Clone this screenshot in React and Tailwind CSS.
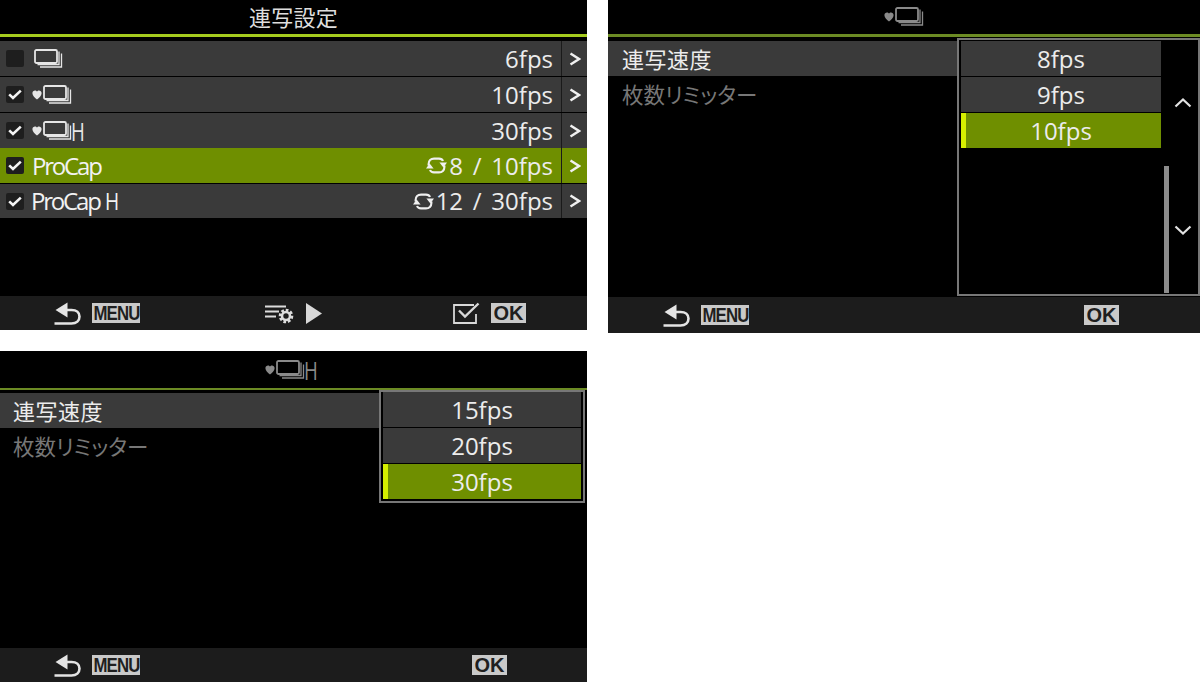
import React from "react";

const FONT = "[font-family:'Open_Sans','Noto_Sans_CJK_JP',sans-serif]";

// stacked frames, optional heart + H
const BurstIcon = ({ heart = false, h = false, color = "#e6e6e6", className = "" }) => (
  <span className={`inline-flex items-center ${className}`}>
    {heart && (
      <svg width="10" height="10" viewBox="0 0 10 10" className="mr-[1px]">
        <path d="M5 9.6C3 7.6.4 5.9.4 3.2.4 1.4 1.7.4 3 .4c.9 0 1.6.5 2 1.2C5.4.9 6.1.4 7 .4c1.3 0 2.6 1 2.6 2.8C9.6 5.9 7 7.6 5 9.6z" fill={color} />
      </svg>
    )}
    <svg width="29" height="20" viewBox="0 0 29 20" fill="none" stroke={color}>
      <rect x="1" y="1" width="22" height="13" rx="1.5" strokeWidth="1.8" />
      <path d="M25 2.5V15.5H3.5" strokeWidth="1.3" />
      <path d="M27.5 4.5V18H6" strokeWidth="1.3" />
    </svg>
    {h && (
      <span className="-ml-[1px] origin-left text-[26px] leading-none [transform:scaleX(0.72)]" style={{ color }}>
        H
      </span>
    )}
  </span>
);

const CheckBox = ({ checked }) => (
  <span className="flex h-[17px] w-[18px] items-center justify-center rounded-[2px] bg-[#1e1e1e]">
    {checked && (
      <svg width="14" height="11" viewBox="0 0 14 11" fill="none">
        <path d="M1.2 5.4 5 9 12.8 1.6" stroke="#f4f4f4" strokeWidth="2.6" />
      </svg>
    )}
  </span>
);

const LoopIcon = () => (
  <svg width="21" height="17" viewBox="0 0 21 17" fill="none" className="mr-[2px]">
    <path d="M2.6 8.5V7C2.6 3.8 4.8 1.6 8 1.6H13C15 1.6 16.4 2.4 17 4" stroke="#f0f0f0" strokeWidth="2.1" />
    <path d="M13.4 5.6H21L17.4 10.6Z" fill="#f0f0f0" />
    <path d="M18.4 8.5V10C18.4 13.2 16.2 15.4 13 15.4H8C6 15.4 4.6 14.6 4 13" stroke="#f0f0f0" strokeWidth="2.1" />
    <path d="M7.6 11.4H0L3.6 6.4Z" fill="#f0f0f0" />
  </svg>
);

const BackArrow = () => (
  <svg width="28" height="23" viewBox="0 0 28 23" fill="none">
    <path d="M0.5 21.5H17.5C22.5 21.5 25.5 18.5 25.5 14.5C25.5 10.5 22.5 8 17.5 8H9" stroke="#e4e4e4" strokeWidth="2.6" />
    <path d="M13.5 0.5V15.5L1.5 8Z" fill="#e4e4e4" />
  </svg>
);

const MenuBadge = () => (
  <span className="ml-[10px] flex h-[20px] w-[48px] items-center justify-center overflow-hidden bg-[#c9c9c9] text-[#1f1f1f] [font-family:'Liberation_Sans',sans-serif]">
    <span className="inline-block text-[20px] font-bold leading-none tracking-[-1px] [transform:scaleX(0.84)]">MENU</span>
  </span>
);

const OkBadge = () => (
  <span className="flex h-[20px] w-[35px] items-center justify-center bg-[#c9c9c9] text-[20px] font-bold leading-none text-[#1f1f1f] [font-family:'Liberation_Sans',sans-serif]">
    OK
  </span>
);

const Back = () => (
  <span className="flex items-center">
    <BackArrow />
    <MenuBadge />
  </span>
);

const SettingsIcon = () => (
  <svg width="30" height="21" viewBox="0 0 30 21" fill="none">
    <path d="M0 3.5H21M0 8.5H14M0 13.5H11" stroke="#dcdcdc" strokeWidth="2.2" />
    <circle cx="21" cy="13" r="5.8" stroke="#dcdcdc" strokeWidth="3" strokeDasharray="2.6 1.8" />
    <circle cx="21" cy="13" r="4" stroke="#dcdcdc" strokeWidth="2.6" />
  </svg>
);

const TickBox = () => (
  <svg width="28" height="22" viewBox="0 0 28 22" fill="none">
    <path d="M21 3H1V21H23V12" stroke="#d8d8d8" strokeWidth="1.8" />
    <path d="M6 8.5 12 14.5 25.5 1.5" stroke="#d8d8d8" strokeWidth="2.4" />
  </svg>
);

const Chevron = ({ dir }) => (
  <svg width="18" height="11" viewBox="0 0 18 11" fill="none">
    <path d={dir === "up" ? "M1.5 9.5 9 2.5 16.5 9.5" : "M1.5 1.5 9 8.5 16.5 1.5"} stroke="#e2e2e2" strokeWidth="2.2" />
  </svg>
);

const Footer = ({ className, children }) => (
  <div className={`flex shrink-0 items-center bg-[#1c1c1c] ${className}`}>{children}</div>
);

const Title = ({ line = "bg-[#6c8b24]", height = "h-[34px]", lineHeight = "h-[3px]", children }) => (
  <>
    <div className={`flex shrink-0 items-center justify-center bg-black text-[22px] tracking-[0.3px] text-[#dedede] ${height}`}>{children}</div>
    <div className={`shrink-0 ${lineHeight} ${line}`} />
  </>
);

const settings = [
  { checked: false, icon: <BurstIcon className="ml-[10px]" />, value: "6fps" },
  { checked: true, icon: <BurstIcon heart className="ml-[8px]" />, value: "10fps" },
  { checked: true, icon: <BurstIcon heart h className="ml-[8px]" />, value: "30fps" },
  { checked: true, label: "ProCap", labelClass: "ml-[8px]", loop: true, value: "8 / 10fps", active: true, rowClass: "h-[35px] -mt-[1px]" },
  { checked: true, label: "ProCap", h: true, labelClass: "ml-[7px]", loop: true, value: "12 / 30fps", rowClass: "h-[34px]" },
];

const SettingRow = ({ row }) => (
  <div className={`flex items-center pl-[6px] ${row.rowClass || "h-[35px]"} ${row.active ? "bg-[#6f8f00]" : "bg-[#3a3a3a]"}`}>
    <CheckBox checked={row.checked} />
    {row.icon}
    {row.label && (
      <span className={`text-[24px] leading-none tracking-[-2.2px] text-[#f2f2f2] ${row.labelClass}`}>
        {row.label}
        {row.h && <span className="ml-[5px] inline-block origin-left [transform:scaleX(0.8)]">H</span>}
      </span>
    )}
    <span className="ml-auto flex items-center pr-[8px] text-[24px] leading-none text-[#ececec]">
      {row.loop && <LoopIcon />}
      <span className="whitespace-pre [word-spacing:3.5px]">{row.value}</span>
    </span>
    <span className="flex h-full w-[26px] items-center justify-center border-l border-[#1a1a1a]">
      <svg width="12" height="14" viewBox="0 0 12 14" fill="none">
        <path d="M1.5 1.5 10 7 1.5 12.5" stroke="#f0f0f0" strokeWidth="2.4" />
      </svg>
    </span>
  </div>
);

const Option = ({ value, active }) => (
  <div className={`flex h-[35px] items-center justify-center text-[24px] leading-none text-[#ececec] ${active ? "border-l-[5px] border-[#d6f000] bg-[#6f8f00] pr-[5px]" : "bg-[#3a3a3a]"}`}>
    {value}
  </div>
);

const SideList = ({ width, inset = "pl-[14px]" }) => (
  <div className={`pt-[3px] ${width}`}>
    <div className={`flex h-[35px] items-center bg-[#3a3a3a] text-[22px] leading-none tracking-[0.5px] text-[#ececec] ${inset}`}>連写速度</div>
    <div className={`flex h-[37px] items-center text-[21.5px] leading-none text-[#777777] [font-feature-settings:'palt'] ${inset}`}>枚数リミッター</div>
  </div>
);

export default function App() {
  return (
    <div className={`flex h-[682px] w-[1200px] gap-[21px] overflow-hidden bg-white ${FONT}`}>
      <div className="flex w-[587px] flex-col gap-[21px]">
        {/* burst list */}
        <div className="flex h-[330px] flex-col bg-black">
          <Title line="bg-[#a5cb1e]">連写設定</Title>
          <div className="flex flex-1 flex-col gap-[1px] pt-[4px]">
            {settings.map((row, i) => (
              <SettingRow key={i} row={row} />
            ))}
          </div>
          <Footer className="h-[34px] pl-[54px]">
            <Back />
            <span className="ml-[125px] flex items-center gap-[11px]">
              <SettingsIcon />
              <svg width="16" height="21" viewBox="0 0 16 21">
                <path d="M0 0 16 10.5 0 21Z" fill="#d8d8d8" />
              </svg>
            </span>
            <span className="ml-[131px] flex items-center gap-[10px]">
              <TickBox />
              <OkBadge />
            </span>
          </Footer>
        </div>

        {/* heart H */}
        <div className="flex h-[331px] flex-col bg-black">
          <Title height="h-[37px]" lineHeight="h-[2px]">
            <BurstIcon heart h color="#8a8a8a" className="pl-[2px]" />
          </Title>
          <div className="flex flex-1 items-start">
            <SideList width="w-[379px]" inset="pl-[13px]" />
            <div className="flex w-[206px] flex-col gap-[1px] border-2 border-[#777777] p-[2px] pt-[0px]">
              <Option value="15fps" />
              <Option value="20fps" />
              <Option value="30fps" active />
            </div>
          </div>
          <Footer className="h-[34px] pl-[54px]">
            <Back />
            <span className="ml-[332px]">
              <OkBadge />
            </span>
          </Footer>
        </div>
      </div>

      {/* heart */}
      <div className="flex h-[333px] w-[592px] flex-col bg-black">
        <Title>
          <BurstIcon heart color="#8a8a8a" />
        </Title>
        <div className="mb-[1px] mt-[1px] flex flex-1">
          <SideList width="w-[349px]" />
          <div className="flex flex-1 border-2 border-[#777777] pl-[2px] pt-[1px]">
            <div className="flex w-[200px] flex-col gap-[1px]">
              <Option value="8fps" />
              <Option value="9fps" />
              <Option value="10fps" active />
            </div>
            <div className="flex flex-1 flex-col items-center pl-[3px]">
              <div className="flex h-[125px] w-full items-end justify-between">
                <span />
                <span className="mb-[58px] mr-[6px]">
                  <Chevron dir="up" />
                </span>
              </div>
              <div className="flex w-full flex-1 items-stretch pb-[1px]">
                <span className="w-[5px] bg-[#8c8c8c]" />
                <span className="ml-[5px] mt-[59px]">
                  <Chevron dir="down" />
                </span>
              </div>
            </div>
          </div>
        </div>
        <Footer className="h-[36px] pl-[55px]">
          <Back />
          <span className="ml-[335px]">
            <OkBadge />
          </span>
        </Footer>
      </div>
    </div>
  );
}
